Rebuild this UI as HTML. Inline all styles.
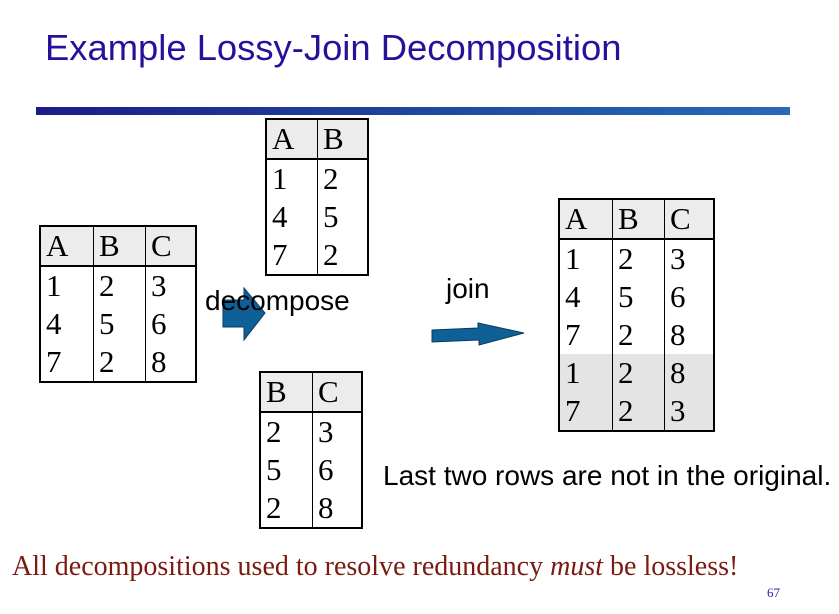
<!DOCTYPE html>
<html><head><style>
body{margin:0;width:839px;height:614px;background:#fff;position:relative;overflow:hidden;font-family:"Liberation Sans",sans-serif}
.a{position:absolute;white-space:nowrap;line-height:1}
table{position:absolute;border-collapse:collapse;font-family:"Liberation Serif",serif;font-size:31px;color:#000;border:2px solid #000}
td{border-left:1.5px solid #000;padding:0 0 0 5px;line-height:38px;height:38px;vertical-align:middle}
td:first-child{border-left:none}
tr.h td{background:#ececec;border-bottom:2px solid #000;height:38px}
tr.g td{background:#e4e4e4}
</style></head><body>
<div class="a" style="left:45px;top:30px;font-size:36.4px;color:#2a0f9a;">Example Lossy-Join Decomposition</div>
<div class="a" style="left:36px;top:107px;width:754px;height:8px;background:linear-gradient(90deg,#1c1c8a,#1f4fa0 60%,#2a6ab8)"></div>

<table style="left:39px;top:225px;width:158px">
<tr class="h"><td style="width:47px">A</td><td style="width:46px">B</td><td>C</td></tr>
<tr><td>1</td><td>2</td><td>3</td></tr>
<tr><td>4</td><td>5</td><td>6</td></tr>
<tr><td>7</td><td>2</td><td>8</td></tr>
</table>

<table style="left:265px;top:118px;width:104px">
<tr class="h"><td style="width:45px">A</td><td>B</td></tr>
<tr><td>1</td><td>2</td></tr>
<tr><td>4</td><td>5</td></tr>
<tr><td>7</td><td>2</td></tr>
</table>

<table style="left:259px;top:371px;width:104px">
<tr class="h"><td style="width:46px">B</td><td>C</td></tr>
<tr><td>2</td><td>3</td></tr>
<tr><td>5</td><td>6</td></tr>
<tr><td>2</td><td>8</td></tr>
</table>

<table style="left:558px;top:198px;width:157px">
<tr class="h"><td style="width:47px">A</td><td style="width:46px">B</td><td>C</td></tr>
<tr><td>1</td><td>2</td><td>3</td></tr>
<tr><td>4</td><td>5</td><td>6</td></tr>
<tr><td>7</td><td>2</td><td>8</td></tr>
<tr class="g"><td>1</td><td>2</td><td>8</td></tr>
<tr class="g"><td>7</td><td>2</td><td>3</td></tr>
</table>

<svg class="a" style="left:0;top:0" width="839" height="614">
<polygon points="223,300 244,300 244,288 265,313 244,340 244,327 223,327" fill="#0f6096" stroke="#0a3a5c" stroke-width="1"/>
<polygon points="432,330 478,328 478,323 524,333 479,345 479,340 432,342" fill="#0f6096" stroke="#0a3a5c" stroke-width="1"/>
</svg>
<div class="a" style="left:205px;top:287px;font-size:28px;">decompose</div>
<div class="a" style="left:446px;top:275px;font-size:28px;">join</div>
<div class="a" style="left:383px;top:462px;font-size:28px;">Last two rows are not in the original.</div>
<div class="a" style="left:12px;top:553px;font-size:28px;font-family:'Liberation Serif',serif;color:#7a1a10;">All decompositions used to resolve redundancy <i>must</i> be lossless!</div>
<div class="a" style="left:767px;top:586px;font-size:13px;font-family:'Liberation Serif',serif;color:#3020a0;">67</div>
</body></html>
